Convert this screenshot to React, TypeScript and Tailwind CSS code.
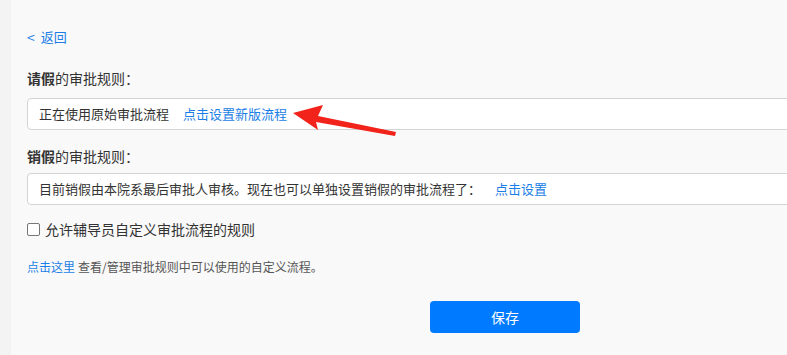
import React from "react";

const font = { fontFamily: '"Noto Sans CJK SC", "Noto Sans", sans-serif' };

export default function App() {
  return (
    <div
      className="relative flex h-[355px] w-[787px] overflow-hidden bg-[#f9f9f9] text-[#333]"
      style={font}
    >
      {/* 左侧灰条 */}
      <div className="w-[11px] shrink-0 bg-[#f3f3f3]" />

      <main className="flex-1 pl-[16px]">
        {/* 返回 */}
        <div className="mt-[27px] flex h-[20px] items-center gap-[6px] text-[13px] text-[#1a7ee6]">
          <span className="text-[14px]">&lt;</span>
          <span>返回</span>
        </div>

        {/* 请假 */}
        <div className="mt-[21px] flex h-[20px] items-center text-[14px]">
          <span className="font-semibold">请假</span>
          <span>的审批规则：</span>
        </div>
        <div className="mt-[10px] flex h-[32px] w-[800px] items-center rounded-l-[4px] border border-[#d4d4d4] bg-white pl-[11px] text-[13px] text-[#333]">
          <span>正在使用原始审批流程</span>
          <span className="ml-[14px] text-[#1a7ee6]">点击设置新版流程</span>
        </div>

        {/* 销假 */}
        <div className="mt-[16px] flex h-[20px] items-center text-[14px]">
          <span className="font-semibold">销假</span>
          <span>的审批规则：</span>
        </div>
        <div className="mt-[7px] flex h-[32px] w-[800px] items-center rounded-l-[4px] border border-[#d4d4d4] bg-white pl-[11px] text-[13px] text-[#333]">
          <span>目前销假由本院系最后审批人审核。现在也可以单独设置销假的审批流程了：</span>
          <span className="ml-[14px] text-[#1a7ee6]">点击设置</span>
        </div>

        {/* 复选框 */}
        <label className="mt-[17px] flex h-[14px] items-center gap-[5px] text-[14px]">
          <span className="h-[13px] w-[13px] rounded-[2px] border border-[#767676] bg-white" />
          <span>允许辅导员自定义审批流程的规则</span>
        </label>

        <div className="mt-[23px] flex h-[16px] items-center text-[12px] text-[#555]">
          <span className="text-[#1a7ee6]">点击这里</span>
          <span className="ml-[3px]">查看/管理审批规则中可以使用的自定义流程。</span>
        </div>

        {/* 保存 */}
        <div className="mt-[26px] pl-[403px]">
          <button className="flex h-[32px] w-[150px] items-center justify-center rounded-[4px] bg-[#007aff] text-[14px] text-white">
            保存
          </button>
        </div>
      </main>

      {/* 红色箭头标注 */}
      <svg
        className="pointer-events-none absolute left-0 top-0"
        width="787"
        height="355"
        viewBox="0 0 787 355"
      >
        <polygon
          points="293,113 323,105 318,116 396,132 395,136 316,122 318,130"
          fill="#f2231b"
        />
      </svg>
    </div>
  );
}
